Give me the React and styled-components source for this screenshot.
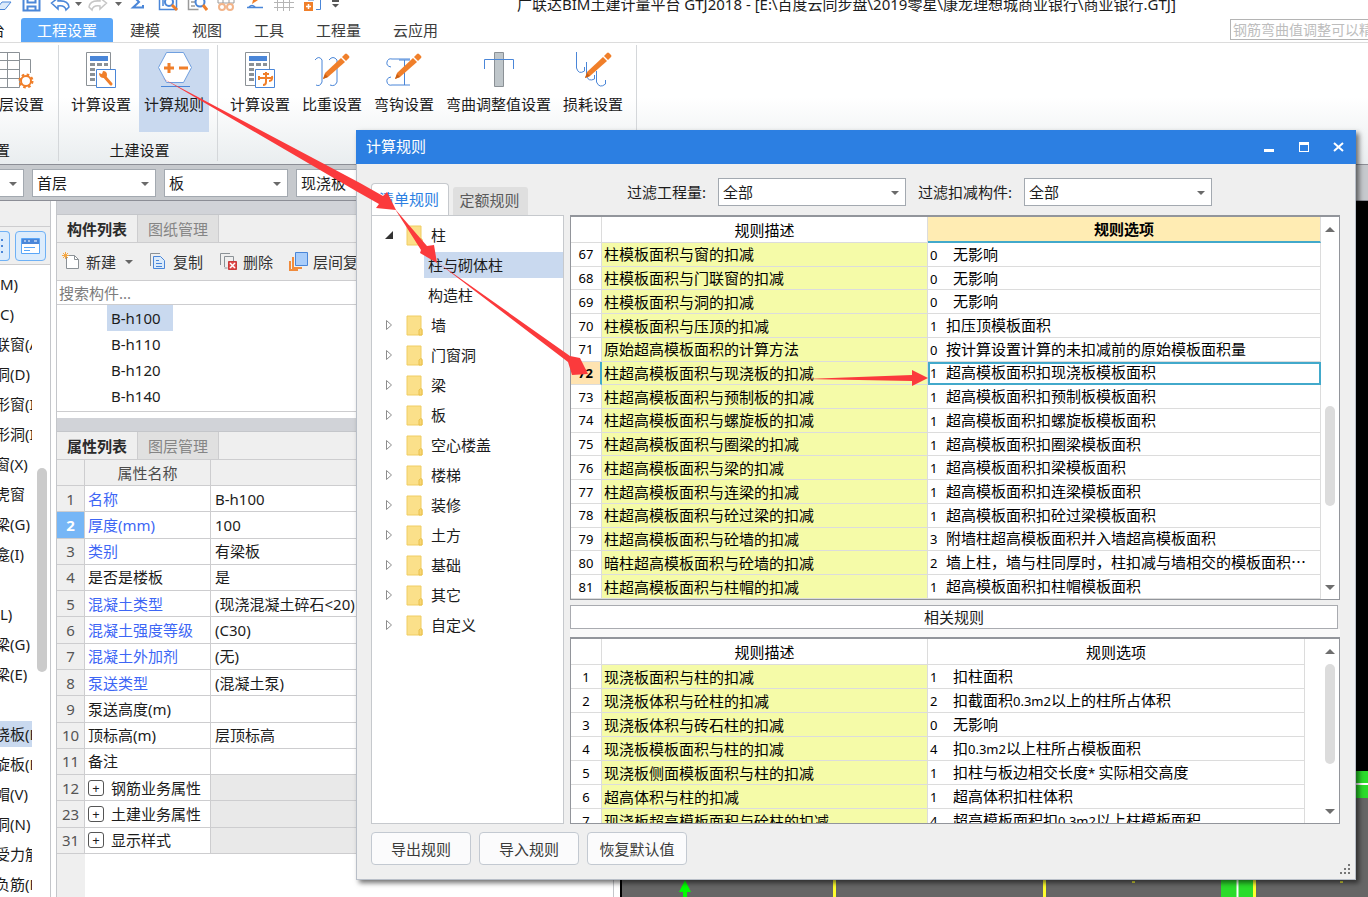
import React from "react";
import styled, { createGlobalStyle, css } from "styled-components";

const UI_FONT = '"Noto Sans", "Noto Sans CJK SC", sans-serif';
const GRID_FONT = '"Noto Sans CJK SC", "Noto Sans", sans-serif';

const color = {
  blue: "#2c7fe2",
  tab: "#59a6f8",
  selected: "#c9d9ef",
  panel: "#efefef",
  line: "#cdcdcf",
  frame: "#8c8e96",
  yellow: "#f5fba8",
  teal: "#42a9cb",
  orange: "#f07f2a",
  iconBlue: "#4a86d8",
};

const GlobalStyle = createGlobalStyle`
  *, *::before, *::after { box-sizing: border-box; }
  body {
    margin: 0;
    background: #fff;
    color: #1c1c1c;
    font: 15px/20px ${UI_FONT};
  }
  button, input, select { font: inherit; color: inherit; margin: 0; }
  ul { list-style: none; margin: 0; padding: 0; }
`;

/* ---------- window frame ---------- */

const Window = styled.div`
  position: relative;
  display: flex;
  flex-direction: column;
  height: 100vh;
  overflow: hidden;
  white-space: nowrap;
`;

const TitleBar = styled.header`
  display: flex;
  flex: none;
  height: 18px;
  overflow: hidden;
`;

const QuickTools = styled.div`
  display: flex;
  width: 517px;
  flex: none;
`;

const QuickButton = styled.button`
  flex: none;
  display: flex;
  justify-content: center;
  width: ${(p) => p.$w}px;
  height: 12px;
  padding: 0;
  border: 0;
  background: none;
  overflow: hidden;
  svg { flex: none; }
`;

const WindowTitle = styled.h1`
  margin: -7px 0 0;
  font-size: 15px;
  line-height: 22px;
  font-weight: 400;
`;

const MenuBar = styled.nav`
  display: flex;
  flex: none;
  justify-content: space-between;
  height: 25px;
  border-bottom: 1px solid #dcdcdc;
`;

const MenuTabs = styled.div`
  display: flex;
`;

const MenuClip = styled.button`
  display: flex;
  justify-content: flex-end;
  width: 5px;
  margin-right: 16px;
  padding: 0;
  border: 0;
  background: none;
  overflow: hidden;
  line-height: 24px;
`;

const MenuTab = styled.button`
  padding: 0 16px;
  border: 0;
  border-radius: 3px 3px 0 0;
  background: none;
  color: #3c3c3c;
  line-height: 24px;
  ${(p) => p.$active && css`
    margin-right: 1px;
    background: ${color.tab};
    color: #fff;
  `}
`;

const HelpSearch = styled.input`
  width: 138px;
  height: 21px;
  margin-top: 1px;
  padding: 0 0 0 2px;
  border: 1px solid #b4b4b4;
  border-right: 0;
  background: #fff;
  font-size: 14px;
  &::placeholder { color: #bdbdbd; opacity: 1; }
`;

/* ---------- ribbon ---------- */

const Ribbon = styled.div`
  display: flex;
  flex: none;
  height: 121px;
  padding-top: 2px;
  background: linear-gradient(#fff 45%, #e9edef);
`;

const RibbonGroup = styled.section`
  display: flex;
  flex-direction: column;
  justify-content: space-between;
  height: 116px;
  padding: 4px 8px 1px 7px;
  border-right: 1px solid #d4d7da;
  ${(p) => p.$cut && css`
    width: 59px;
    padding-left: 0;
    overflow: hidden;
  `}
`;

const RibbonItems = styled.div`
  display: flex;
  gap: ${(p) => (p.$tight ? 2 : 3)}px;
`;

const RibbonButton = styled.button`
  display: flex;
  flex-direction: column;
  align-items: center;
  gap: 3px;
  height: 83px;
  padding: 2px 5px 0;
  border: 0;
  background: ${(p) => (p.$active ? color.selected : "transparent")};
  line-height: 24px;
  ${(p) => p.$cut && css`
    padding: 2px 0 0;
    align-items: flex-start;
    margin-left: -1px;
  `}
`;

const GroupLabel = styled.div`
  text-align: ${(p) => (p.$cut ? "left" : "center")};
  margin-left: ${(p) => (p.$cut ? "-5px" : "4px")};
  line-height: 20px;
`;

const SelectorBar = styled.div`
  display: flex;
  flex: none;
  gap: 8px;
  height: 37px;
  padding-top: 4px;
  border-top: 1px solid ${color.frame};
  border-bottom: 1px solid ${color.frame};
  background: #c6c9cd;
`;

const SelectBox = styled.span`
  position: relative;
  flex: none;
  display: block;
  width: ${(p) => p.$w}px;
  height: 28px;
  border: 1px solid #a3a9b0;
  border-left-width: ${(p) => (p.$cut ? 0 : 1)}px;
  background: #fff;
  &::after {
    content: "";
    position: absolute;
    right: 6px;
    top: 12px;
    border: 4px solid transparent;
    border-top-color: #6a6a6a;
    border-bottom: 0;
    pointer-events: none;
  }
`;

const Select = styled.select`
  display: block;
  width: 100%;
  height: 26px;
  padding: 0 16px 0 4px;
  border: 0;
  background: transparent;
  appearance: none;
`;

/* ---------- left side ---------- */

const Workspace = styled.main`
  display: flex;
  flex: 1;
  min-height: 0;
`;

const NavColumn = styled.aside`
  display: flex;
  flex-direction: column;
  flex: none;
  width: 51px;
  border-right: 1px solid #c4c6ca;
  overflow: hidden;
`;

const NavHead = styled.div`
  flex: none;
  height: 26px;
  background: ${color.panel};
  border-bottom: 1px solid ${color.line};
`;

const NavTools = styled.div`
  display: flex;
  flex: none;
  gap: 5px;
  height: 38px;
  padding-top: 4px;
  background: ${color.panel};
  border-bottom: 1px solid ${color.line};
`;

const NavTool = styled.button`
  display: flex;
  align-items: center;
  justify-content: center;
  width: ${(p) => (p.$cut ? 10 : 31)}px;
  height: 30px;
  padding: 0;
  border: 1px solid #6fb1f5;
  border-left-width: ${(p) => (p.$cut ? 0 : 1)}px;
  border-radius: ${(p) => (p.$cut ? "0 4px 4px 0" : "4px")};
  background: #dcecfc;
`;

const NavBody = styled.div`
  display: flex;
  flex: 1;
  min-height: 0;
  padding-top: 4px;
`;

const NavList = styled.ul`
  width: 32px;
  overflow: hidden;
`;

const NavItem = styled.li`
  display: flex;
  align-items: center;
  height: 30px;
  span {
    flex: 1;
    display: block;
    height: 26px;
    line-height: 26px;
    background: ${(p) => (p.$active ? color.selected : "transparent")};
    text-indent: ${(p) => (p.$whole ? 0 : -5)}px;
  }
`;

const NavThumb = styled.div`
  width: 10px;
  height: 204px;
  margin: 199px 0 0 5px;
  border-radius: 5px;
  background: #cbcbcb;
`;

const PanelColumn = styled.div`
  display: flex;
  flex-direction: column;
  flex: none;
  width: 558px;
  margin-left: 5px;
  border-left: 1px solid #c4c6ca;
  border-right: 1px solid #c4c6ca;
`;

const Panel = styled.section`
  display: flex;
  flex-direction: column;
  flex: ${(p) => (p.$grow ? 1 : "none")};
  margin-bottom: ${(p) => (p.$grow ? 0 : 6)}px;
`;

const PanelBand = styled.div`
  flex: none;
  height: 14px;
  background: #d1d3d8;
  border-bottom: 1px solid #c4c6ca;
`;

const PanelTabs = styled.div`
  display: flex;
  flex: none;
  height: 28px;
  background: ${color.panel};
  border-bottom: 1px solid ${color.line};
`;

const PanelTab = styled.button`
  padding: 0 10px;
  border: 0;
  border-right: 1px solid ${color.line};
  background: ${(p) => (p.$active ? color.panel : "#e0e0e0")};
  color: ${(p) => (p.$active ? "#2b2b2b" : "#858585")};
  font-weight: ${(p) => (p.$active ? 700 : 400)};
`;

const PanelToolbar = styled.div`
  display: flex;
  flex: none;
  align-items: center;
  gap: 16px;
  height: 38px;
  padding-left: 5px;
  background: ${color.panel};
  border-bottom: 1px solid ${color.line};
`;

const ToolButton = styled.button`
  display: flex;
  align-items: center;
  gap: 5px;
  padding: 0;
  border: 0;
  background: none;
  color: #333;
`;

const Caret = styled.i`
  margin-left: ${(p) => (p.$gap ? 4 : 0)}px;
  border: 4px solid transparent;
  border-top-color: #666;
  border-bottom: 0;
`;

const PartSearch = styled.input`
  flex: none;
  height: 24px;
  padding: 0 2px;
  border: 0;
  border-bottom: 1px solid ${color.line};
  outline: 0;
  &::placeholder { color: #7c7c7c; opacity: 1; }
`;

const PartList = styled.ul`
  height: 107px;
  padding-left: 50px;
  border-bottom: 1px solid ${color.line};
`;

const PartItem = styled.li`
  width: 66px;
  padding-left: 4px;
  line-height: 26px;
  background: ${(p) => (p.$active ? color.selected : "transparent")};
`;

const PropTable = styled.table`
  width: 100%;
  height: 394px;
  border-collapse: separate;
  border-spacing: 0;
  table-layout: fixed;
  th, td {
    height: 26px;
    padding: 0 4px;
    border-right: 1px solid ${color.line};
    border-bottom: 1px solid ${color.line};
    font-weight: 400;
    text-align: left;
    overflow: hidden;
  }
  thead th { background: ${color.panel}; color: #4c4c4c; text-align: center; }
`;

const PropNo = styled.th`
  && {
    padding: 0;
    text-align: center;
    color: ${(p) => (p.$active ? "#fff" : "#555")};
    background: ${(p) => (p.$active ? "#76b6f6" : color.panel)};
    font-weight: ${(p) => (p.$active ? 700 : 400)};
  }
`;

const PropName = styled.td`
  && { padding-left: 3px; }
  color: ${(p) => (p.$link ? "#3d66f5" : "#1c1c1c")};
`;

const PropValue = styled.td`
  background: ${(p) => (p.$group ? "#e9e9e9" : "#fff")};
`;

const Expand = styled.button`
  width: 16px;
  height: 16px;
  margin-right: 7px;
  padding: 0;
  border: 1px solid #555;
  border-radius: 3px;
  background: #fff;
  font-size: 13px;
  line-height: 12px;
  vertical-align: 1px;
`;

const GutterTail = styled.div`
  flex: 1;
  width: 28px;
  background: ${color.panel};
`;

const DrawingArea = styled.div`
  flex: 1;
  min-width: 0;
  margin-left: 6px;
  overflow: hidden;
  background: #000;
  svg { display: block; }
`;

/* ---------- dialog ---------- */

const Dialog = styled.section`
  position: absolute;
  left: 356px;
  right: 12px;
  top: 130px;
  bottom: 17px;
  display: flex;
  flex-direction: column;
  background: ${color.panel};
  box-shadow: 3px 3px 5px rgba(0, 0, 0, 0.55);
`;

const DialogHead = styled.header`
  display: flex;
  flex: none;
  justify-content: space-between;
  height: 34px;
  padding-left: 10px;
  background: ${color.blue};
  color: #fff;
  h2 { margin: 0; font-size: 15px; font-weight: 400; line-height: 33px; }
`;

const HeadButtons = styled.div`
  display: flex;
`;

const HeadButton = styled.button`
  width: 35px;
  padding: 0;
  border: 0;
  background: none;
  svg { display: block; margin: 0 auto; }
`;

const DialogBody = styled.div`
  display: flex;
  flex-direction: column;
  flex: 1;
  min-height: 0;
  padding: 0 15px 0 14px;
  border: 1px solid #b9bfc8;
  border-top: 0;
`;

const TopStrip = styled.div`
  display: flex;
  flex: none;
  align-items: flex-end;
  height: 51px;
`;

const RuleTab = styled.button`
  padding: 0 2px 2px 0;
  border: 0;
  ${(p) => p.$active ? css`
    width: 78px;
    height: 33px;
    margin: 0 4px -1px 0;
    border: 1px solid #c6c9cd;
    border-bottom: 0;
    border-radius: 4px 4px 0 0;
    background: #fff;
    color: ${color.blue};
  ` : css`
    width: 75px;
    height: 28px;
    border-radius: 3px 3px 0 0;
    background: #dfdfdf;
    color: #5a5a5a;
  `}
`;

const Filters = styled.div`
  display: flex;
  align-self: flex-start;
  gap: 12px;
  margin: 14px 0 0 99px;
  label { line-height: 28px; }
`;

const Columns = styled.div`
  display: flex;
  flex: 1;
  gap: 6px;
  min-height: 0;
`;

const TreeBox = styled.div`
  flex: none;
  width: 193px;
  padding-top: 4px;
  border: 1px solid #c6c9cd;
  background: #fff;
`;

const TreeItem = styled.li`
  display: flex;
  align-items: center;
  height: 30px;
  padding-left: 12px;
`;

const Folder = styled.svg`
  flex: none;
  margin: 0 8px 0 12px;
`;

const TreeLeaf = styled.li`
  display: flex;
  align-items: center;
  height: 30px;
  padding-left: 52px;
  span {
    flex: 1;
    padding-left: 4px;
    line-height: 26px;
    background: ${(p) => (p.$active ? color.selected : "transparent")};
  }
`;

const RuleColumn = styled.div`
  display: flex;
  flex-direction: column;
  flex: 1;
  min-width: 0;
`;

const GridFrame = styled.div`
  display: flex;
  flex: ${(p) => (p.$grow ? 1 : "none")};
  min-height: 0;
  border: 1px solid #92959b;
  border-top-width: 2px;
  background: #fff;
  overflow: hidden;
`;

const GridArea = styled.div`
  flex: 1;
  min-width: 0;
  margin-right: ${(p) => (p.$inset ? 16 : 0)}px;
`;

const Grid = styled.table`
  width: 100%;
  height: ${(p) => (p.$h ? `${p.$h}px` : "auto")};
  border-collapse: separate;
  border-spacing: 0;
  table-layout: fixed;
  color: #000;
  font-family: ${GRID_FONT};
  th, td {
    height: ${(p) => (p.$h ? 23 : 24)}px;
    padding: 0 2px;
    border-right: 1px solid #dcdcdc;
    border-bottom: 1px solid #dcdcdc;
    font-weight: 400;
    text-align: left;
    overflow: hidden;
  }
  thead th { height: 26px; text-align: center; }
`;

const OptionHead = styled.th`
  ${(p) => p.$active && css`
    &&& {
      background: #ffecb3;
      border-bottom: 2px solid ${color.teal};
      font-weight: 700;
    }
  `}
`;

const RowNo = styled.th`
  && {
    padding: 0;
    text-align: center;
    font-family: ${UI_FONT};
    font-size: 13px;
    ${(p) => p.$active && css`
      background: #ffe3b0;
      border-right: 2px solid ${color.teal};
      font-weight: 700;
    `}
  }
`;

const Desc = styled.td`
  background: ${color.yellow};
`;

const Option = styled.td`
  ${(p) => p.$active && css`
    && {
      outline: 2px solid ${color.teal};
      outline-offset: -2px;
    }
  `}
`;

const Code = styled.span`
  display: inline-block;
  width: ${(p) => (p.$wide ? 23 : 16)}px;
  font-family: ${UI_FONT};
  font-size: 13px;
`;

const Half = styled.span`
  font-family: ${UI_FONT};
  font-size: 13px;
`;

const ScrollTrack = styled.div`
  display: flex;
  flex-direction: column;
  align-items: center;
  flex: none;
  width: 18px;
  padding: 10px 0 9px;
`;

const ScrollArrow = styled.i`
  flex: none;
  border: 5px solid transparent;
  ${(p) => p.$down
    ? css`border-top-color: #6e6e6e; border-bottom: 0; margin-top: auto;`
    : css`border-bottom-color: #6e6e6e; border-top: 0;`}
`;

const ScrollThumb = styled.div`
  flex: none;
  width: 10px;
  height: 100px;
  margin-top: ${(p) => p.$top}px;
  border-radius: 5px;
  background: #dcdcdc;
`;

const RelatedBar = styled.div`
  flex: none;
  height: 24px;
  margin: 5px 2px 0 0;
  border: 1px solid #a9abb0;
  background: #fff;
  line-height: 22px;
  text-align: center;
`;

const Splitter = styled.div`
  flex: none;
  height: 8px;
  background: #f9f9f9;
`;

const DialogFoot = styled.footer`
  position: relative;
  display: flex;
  flex: none;
  gap: 8px;
  height: 55px;
  padding-top: 8px;
`;

const FootButton = styled.button`
  width: 100px;
  height: 33px;
  padding: 0;
  border: 1px solid #c3c9d1;
  border-radius: 4px;
  background: #fbfbfc;
  color: #3a3a3a;
`;

const Grip = styled.svg`
  position: absolute;
  right: -11px;
  bottom: 4px;
`;

const Arrows = styled.svg`
  position: absolute;
  left: 0;
  top: 0;
  pointer-events: none;
`;

/* ---------- icons ---------- */

const Pencil = () => (
  <g>
    <path d="M10 28l2-6L28 7l4 4-17 15z" fill={color.orange} />
    <path d="M29 6l3-3q1-1 2 0l2 2q1 1 0 2l-3 3z" fill={color.orange} />
    <path d="M10 28l2-5 3 3z" fill="#c95f14" />
  </g>
);

const Calculator = () => (
  <g>
    <path d="M4.500 1.500h24v18M4.500 1.500v33h11" fill="#fff" stroke="#8b9196" />
    <path d="M8 5h18v5H8z" fill={color.iconBlue} />
    <path d="M8 12h5v3H8zM15 12h5v3h-5zM22 12h4v3h-4zM8 17h5v3H8zM8 22h5v3H8zM8 27h5v3H8z" fill="#8b9196" />
    <path d="M14.500 18.500h19v18h-19z" fill="#fff" stroke={color.iconBlue} />
  </g>
);

const ribbonArt = {
  floors: (
    <g fill="none">
      <path d="M0 1.500h20.500v35H0M8.500 1v36M0 9.500h20M0 18.500h20M0 27.500h20M21 8.500h10.500V22" stroke="#8b9196" />
      <circle cx="27" cy="30" r="5" stroke={color.orange} strokeWidth="2" />
      <circle cx="27" cy="30" r="6" stroke={color.orange} strokeWidth="3" strokeDasharray="2.4 2.3" />
    </g>
  ),
  wrench: (
    <g>
      <Calculator />
      <path d="M22 25l7 8" stroke={color.orange} strokeWidth="3" strokeLinecap="round" />
      <path d="M17 22l3 1 1-3q4 0 4 4 0 3-3 3-5 0-5-5z" fill={color.orange} />
    </g>
  ),
  rules: (
    <g>
      <path d="M11.500 1.500h17l8 15-8 15h-17l-8-15z" fill="#fff" stroke="#6f9fdf" />
      <path d="M9 17h10M14 12v10M24 17h9" stroke={color.orange} strokeWidth="3" />
      <path d="M6 35.500h29" stroke={color.iconBlue} />
    </g>
  ),
  hooks: (
    <g>
      <Calculator />
      <path d="M25 21v10q0 3-3 3M22 23h6M18 27h13M18 25v4M31 25q1 5-3 5" fill="none" stroke={color.orange} strokeWidth="2" />
    </g>
  ),
  weight: (
    <g>
      <path d="M2 9q4-5 7 0v22q-2 5-6 3M16 9q4-5 8 0v22q-2 5-7 3" fill="none" stroke={color.iconBlue} />
      <Pencil />
    </g>
  ),
  bend: (
    <g>
      <path d="M6 16q-5-1-4-5t5-3h18M6 26q-5 1-4 5t5 3h18M19.500 9v25M14 9h11" fill="none" stroke={color.iconBlue} />
      <Pencil />
    </g>
  ),
  adjust: (
    <g>
      <path d="M14.500 1.500h9v34h-9z" fill="#bfc6ca" stroke="#8b9196" />
      <path d="M4.500 18V8.500h29V18" fill="none" stroke={color.iconBlue} />
    </g>
  ),
  loss: (
    <g>
      <path d="M2.500 1v16q2 7 8 3V16M12.500 11v14q2 6 8 3v-4M22.500 20v11q3 7 9 2v-4" fill="none" stroke={color.iconBlue} />
      <g transform="translate(1 -1)"><Pencil /></g>
    </g>
  ),
};

const RibbonIcon = ({ kind }) => (
  <svg width="38" height="38" viewBox="0 0 38 38" aria-hidden="true">{ribbonArt[kind]}</svg>
);

const gray = "#9a9a9a";
const quickArt = {
  open: <path d="M0 9.500l7 0L13 2H4L0 7" fill="#dceafa" stroke={color.iconBlue} />,
  save: <path d="M2.500 0v10.500h16V0M6.500 0v2.500h8V0M6.500 10V6.500h8V10" fill="none" stroke={color.iconBlue} strokeWidth="2" />,
  undo: <path d="M1.500 3L8 -2v3q10-1 11 6l-3 3q-1-5-8-4v3z" fill="none" stroke={color.iconBlue} strokeWidth="1.500" />,
  redo: <path d="M18.500 3L12 -2v3q-10-1-11 6l3 3q1-5 8-4v3z" fill="none" stroke="#c6c6c6" strokeWidth="1.500" />,
  caret: <path d="M7 2h7L10.500 6z" fill="#666" />,
  sum: <path d="M5 -4l6 6-6 5.500h10V5" fill="none" stroke={color.iconBlue} strokeWidth="2" />,
  zoom: (
    <g fill="none">
      <path d="M1.500 0v9.500h17V0M5 0v6" stroke={color.iconBlue} strokeWidth="1.500" />
      <circle cx="11" cy="2" r="4" stroke={color.iconBlue} strokeWidth="2" fill="#fff" />
      <path d="M14 5l5 5" stroke={color.orange} strokeWidth="3" />
    </g>
  ),
  find: (
    <g fill="none">
      <path d="M1.500 0v9.500h10M4 2h4M4 6h4" stroke={gray} strokeWidth="1.500" />
      <circle cx="13" cy="2" r="4.500" stroke={color.iconBlue} strokeWidth="2" fill="#fff" />
      <path d="M16 5l4 5" stroke={color.orange} strokeWidth="3" />
    </g>
  ),
  links: (
    <g fill="none">
      <path d="M2 0v3h16V0M7 0v3M13 0v3" stroke={gray} />
      <circle cx="6" cy="7" r="3" stroke="#f2b48a" strokeWidth="2" />
      <circle cx="14" cy="7" r="3" stroke="#f2b48a" strokeWidth="2" />
    </g>
  ),
  pen: (
    <g>
      <path d="M7 4l1-4h5z" fill={color.orange} />
      <path d="M2 7.500h16M4 7q3-3 6 0" fill="none" stroke={color.iconBlue} strokeWidth="1.500" />
    </g>
  ),
  grid: <path d="M0 2.500h20M0 7.500h20M3.500 0v11M9.500 0v11M15.500 0v11" fill="none" stroke="#b5b5b5" />,
  add: (
    <g>
      <path d="M1 2h9v9H1z" fill={color.orange} />
      <path d="M3 6.500h5M5.500 4v5" stroke="#fff" strokeWidth="1.500" />
      <path d="M13 9.500h4.500V0M5 0h6" fill="none" stroke={color.iconBlue} />
    </g>
  ),
  more: <path d="M7 0h7v2H7zM7 4h7l-3.500 3.500z" fill="#555" />,
};

const quickTools = [
  ["打开", "open", 16], ["保存", "save", 30], ["撤销", "undo", 28], ["撤销选项", "caret", 8],
  ["恢复", "redo", 32], ["恢复选项", "caret", 8], ["汇总计算", "sum", 32], ["查看", "zoom", 29],
  ["查找", "find", 29], ["关联", "links", 29], ["编辑", "pen", 29], ["表格", "grid", 29],
  ["添加", "add", 29], ["更多", "more", 14],
];

const toolArt = {
  add: (
    <g fill="none">
      <path d="M4.500 3.500h8l4 4v9h-12z" fill="#fff" stroke="#8b9196" />
      <path d="M12.500 3.500v4h4" stroke="#8b9196" />
      <path d="M3.500 0v7M0 3.500h7M1 1l5 5M6 1L1 6" stroke="#f5a742" />
    </g>
  ),
  copy: (
    <g fill="none" stroke={color.iconBlue}>
      <path d="M1.500 14V1.500H11" stroke="#8b9196" />
      <path d="M4.500 4.500h7l4 4v8h-11z" fill="#dcebfb" />
      <path d="M7 8.500h3M7 11.500h6M7 14.500h6" />
    </g>
  ),
  remove: (
    <g fill="none" stroke="#8b9196">
      <path d="M1.500 13V1.500H11M5.500 15V4.500h9V9M5.500 16h3" />
      <path d="M9.500 9.500h8v8h-8z" fill="#e04a4a" stroke="#c93b3b" />
      <path d="M11 11l5 5M16 11l-5 5" stroke="#fff" strokeWidth="1.500" />
    </g>
  ),
  layers: (
    <g fill="none">
      <path d="M6.500 .500h12v13h-12z" fill="#a9cdfa" stroke={color.iconBlue} />
      <path d="M4 5v11h9M1 9v9h8" stroke="#f08b3c" strokeWidth="2" />
    </g>
  ),
};

const ToolIcon = ({ kind }) => (
  <svg width="19" height="19" viewBox="0 0 19 19" aria-hidden="true">{toolArt[kind]}</svg>
);

/* ---------- data ---------- */

const rules = [
  [67, "柱模板面积与窗的扣减", "0", "无影响", true],
  [68, "柱模板面积与门联窗的扣减", "0", "无影响", true],
  [69, "柱模板面积与洞的扣减", "0", "无影响", true],
  [70, "柱模板面积与压顶的扣减", "1", "扣压顶模板面积"],
  [71, "原始超高模板面积的计算方法", "0", "按计算设置计算的未扣减前的原始模板面积量"],
  [72, "柱超高模板面积与现浇板的扣减", "1", "超高模板面积扣现浇板模板面积"],
  [73, "柱超高模板面积与预制板的扣减", "1", "超高模板面积扣预制板模板面积"],
  [74, "柱超高模板面积与螺旋板的扣减", "1", "超高模板面积扣螺旋板模板面积"],
  [75, "柱超高模板面积与圈梁的扣减", "1", "超高模板面积扣圈梁模板面积"],
  [76, "柱超高模板面积与梁的扣减", "1", "超高模板面积扣梁模板面积"],
  [77, "柱超高模板面积与连梁的扣减", "1", "超高模板面积扣连梁模板面积"],
  [78, "柱超高模板面积与砼过梁的扣减", "1", "超高模板面积扣砼过梁模板面积"],
  [79, "柱超高模板面积与砼墙的扣减", "3", "附墙柱超高模板面积并入墙超高模板面积"],
  [80, "暗柱超高模板面积与砼墙的扣减", "2", "墙上柱，墙与柱同厚时，柱扣减与墙相交的模板面积…"],
  [81, "柱超高模板面积与柱帽的扣减", "1", "超高模板面积扣柱帽模板面积"],
];

const relatedRules = [
  [1, "现浇板面积与柱的扣减", "1", "扣柱面积", true],
  [2, "现浇板体积与砼柱的扣减", "2", "扣截面积0.3m2以上的柱所占体积", true],
  [3, "现浇板体积与砖石柱的扣减", "0", "无影响", true],
  [4, "现浇板模板面积与柱的扣减", "4", "扣0.3m2以上柱所占模板面积", true],
  [5, "现浇板侧面模板面积与柱的扣减", "1", "扣柱与板边相交长度* 实际相交高度", true],
  [6, "超高体积与柱的扣减", "1", "超高体积扣柱体积", true],
  [7, "现浇板超高模板面积与砼柱的扣减", "4", "超高模板面积扣0.3m2以上柱模板面积", true],
];

const props = [
  [1, "名称", "B-h100", "link"],
  [2, "厚度(mm)", "100", "link"],
  [3, "类别", "有梁板", "link"],
  [4, "是否是楼板", "是"],
  [5, "混凝土类型", "(现浇混凝土碎石<20)", "link"],
  [6, "混凝土强度等级", "(C30)", "link"],
  [7, "混凝土外加剂", "(无)", "link"],
  [8, "泵送类型", "(混凝土泵)", "link"],
  [9, "泵送高度(m)", ""],
  [10, "顶标高(m)", "层顶标高"],
  [11, "备注", ""],
  [12, "钢筋业务属性", "", "group"],
  [23, "土建业务属性", "", "group"],
  [31, "显示样式", "", "group"],
];

const navItems = [
  ["M)", true], ["C)", true], ["联窗(A"], ["洞(D)"], ["形窗(I"], ["形洞(I"], ["窗(X)"], ["虎窗"],
  ["梁(G)"], ["龛(I)"], [""], ["L)", true], ["梁(G)"], ["梁(E)"], [""], ["浇板(B"], ["旋板(B"],
  ["帽(V)"], ["洞(N)"], ["受力筋"], ["负筋(F"],
];

const folders = ["墙", "门窗洞", "梁", "板", "空心楼盖", "楼梯", "装修", "土方", "基础", "其它", "自定义"];

/* ---------- composed parts ---------- */

const Combo = ({ id, label, width, value, cut }) => (
  <SelectBox $w={width} $cut={cut}>
    <Select id={id} aria-label={label} defaultValue={value}>
      <option>{value}</option>
    </Select>
  </SelectBox>
);

const mixedText = (text) =>
  text.split(/([!-~]+)/).map((part, i) => (i % 2 ? <Half key={i}>{part}</Half> : part));

const RuleGrid = ({ rows, height, activeRow, label }) => (
  <Grid $h={height} aria-label={label}>
    <colgroup>
      <col style={{ width: 31 }} />
      <col style={{ width: 326 }} />
      <col />
    </colgroup>
    <thead>
      <tr>
        <th />
        <th>规则描述</th>
        <OptionHead $active={Boolean(activeRow)}>规则选项</OptionHead>
      </tr>
    </thead>
    <tbody>
      {rows.map(([no, desc, code, option, wide]) => (
        <tr key={no}>
          <RowNo $active={no === activeRow}>{no}</RowNo>
          <Desc>{desc}</Desc>
          <Option $active={no === activeRow}>
            <Code $wide={wide}>{code}</Code>
            {mixedText(option)}
          </Option>
        </tr>
      ))}
    </tbody>
  </Grid>
);

const Scroll = ({ top }) => (
  <ScrollTrack aria-hidden="true">
    <ScrollArrow />
    <ScrollThumb $top={top} />
    <ScrollArrow $down />
  </ScrollTrack>
);

const FolderIcon = () => (
  <Folder width="17" height="21" viewBox="0 0 17 21" aria-hidden="true">
    <path d="M1 1h14v13l1 1v5H1z" fill="#fbe08a" stroke="#f0cd62" />
    <path d="M13 19v-4q1-2 3-1v6h-3z" fill="#f7d673" stroke="#e9c04d" />
  </Folder>
);

const RibbonCommand = ({ icon, label, active, cut }) => (
  <RibbonButton $active={active} $cut={cut}>
    <RibbonIcon kind={icon} />
    <span>{label}</span>
  </RibbonButton>
);

const RuleDialog = () => (
  <Dialog role="dialog" aria-label="计算规则">
    <DialogHead>
      <h2>计算规则</h2>
      <HeadButtons>
        <HeadButton aria-label="最小化">
          <svg width="12" height="12"><path d="M1 8h10v3H1z" fill="#fff" /></svg>
        </HeadButton>
        <HeadButton aria-label="最大化">
          <svg width="12" height="12"><path d="M1 1h10v10H1zM2 4v6h8V4z" fill="#fff" fillRule="evenodd" /></svg>
        </HeadButton>
        <HeadButton aria-label="关闭">
          <svg width="12" height="12"><path d="M1 2l9 8M10 2l-9 8" stroke="#fff" strokeWidth="2" /></svg>
        </HeadButton>
      </HeadButtons>
    </DialogHead>
    <DialogBody>
      <TopStrip>
        <RuleTab $active>清单规则</RuleTab>
        <RuleTab>定额规则</RuleTab>
        <Filters>
          <label htmlFor="filter-quantity">过滤工程量:</label>
          <Combo id="filter-quantity" width={188} value="全部" />
          <label htmlFor="filter-part">过滤扣减构件:</label>
          <Combo id="filter-part" width={188} value="全部" />
        </Filters>
      </TopStrip>
      <Columns>
        <TreeBox>
          <ul>
            <TreeItem>
              <svg width="10" height="10" aria-hidden="true"><path d="M1 9l8-8v8z" fill="#333" /></svg>
              <FolderIcon />
              柱
            </TreeItem>
            <TreeLeaf $active><span>柱与砌体柱</span></TreeLeaf>
            <TreeLeaf><span>构造柱</span></TreeLeaf>
            {folders.map((name) => (
              <TreeItem key={name}>
                <svg width="10" height="10" aria-hidden="true">
                  <path d="M2.500 .500v9L7.500 5z" fill="#fff" stroke="#8c8c8c" />
                </svg>
                <FolderIcon />
                {name}
              </TreeItem>
            ))}
          </ul>
        </TreeBox>
        <RuleColumn>
          <GridFrame>
            <GridArea>
              <RuleGrid rows={rules} height={382} activeRow={72} label="清单规则" />
            </GridArea>
            <Scroll top={174} />
          </GridFrame>
          <RelatedBar>相关规则</RelatedBar>
          <Splitter />
          <GridFrame $grow>
            <GridArea $inset>
              <RuleGrid rows={relatedRules} label="相关规则" />
            </GridArea>
            <Scroll top={10} />
          </GridFrame>
        </RuleColumn>
      </Columns>
      <DialogFoot>
        <FootButton>导出规则</FootButton>
        <FootButton>导入规则</FootButton>
        <FootButton>恢复默认值</FootButton>
        <Grip width="11" height="11" aria-hidden="true">
          <path d="M8 0h2v2H8zM4 4h2v2H4zM8 4h2v2H8zM0 8h2v2H0zM4 8h2v2H4zM8 8h2v2H8z" fill="#777" />
        </Grip>
      </DialogFoot>
    </DialogBody>
  </Dialog>
);

export default function App() {
  return (
    <Window>
      <GlobalStyle />
      <TitleBar>
        <QuickTools>
          {quickTools.map(([label, kind, width]) => (
            <QuickButton key={label} $w={width} aria-label={label}>
              <svg width="21" height="12" viewBox="0 0 21 12">{quickArt[kind]}</svg>
            </QuickButton>
          ))}
        </QuickTools>
        <WindowTitle>
          {"广联达BIM土建计量平台 GTJ2018 - [E:\\百度云同步盘\\2019零星\\康龙理想城商业银行\\商业银行.GTJ]"}
        </WindowTitle>
      </TitleBar>
      <MenuBar>
        <MenuTabs>
          <MenuClip>台</MenuClip>
          <MenuTab $active>工程设置</MenuTab>
          <MenuTab>建模</MenuTab>
          <MenuTab>视图</MenuTab>
          <MenuTab>工具</MenuTab>
          <MenuTab>工程量</MenuTab>
          <MenuTab>云应用</MenuTab>
        </MenuTabs>
        <HelpSearch aria-label="搜索" placeholder="钢筋弯曲值调整可以精" />
      </MenuBar>
      <Ribbon>
        <RibbonGroup $cut>
          <RibbonItems>
            <RibbonCommand icon="floors" label="层设置" cut />
          </RibbonItems>
          <GroupLabel $cut>置</GroupLabel>
        </RibbonGroup>
        <RibbonGroup>
          <RibbonItems>
            <RibbonCommand icon="wrench" label="计算设置" />
            <RibbonCommand icon="rules" label="计算规则" active />
          </RibbonItems>
          <GroupLabel>土建设置</GroupLabel>
        </RibbonGroup>
        <RibbonGroup>
          <RibbonItems $tight>
            <RibbonCommand icon="hooks" label="计算设置" />
            <RibbonCommand icon="weight" label="比重设置" />
            <RibbonCommand icon="bend" label="弯钩设置" />
            <RibbonCommand icon="adjust" label="弯曲调整值设置" />
            <RibbonCommand icon="loss" label="损耗设置" />
          </RibbonItems>
        </RibbonGroup>
      </Ribbon>
      <SelectorBar>
        <Combo label="工程" width={24} value="" cut />
        <Combo label="楼层" width={124} value="首层" />
        <Combo label="构件类型" width={124} value="板" />
        <Combo label="构件" width={124} value="现浇板" />
      </SelectorBar>
      <Workspace>
        <NavColumn>
          <NavHead />
          <NavTools>
            <NavTool $cut aria-label="列表">
              <svg width="8" height="18"><path d="M0 3h2M0 9h2M0 15h2" stroke={color.iconBlue} strokeWidth="2" /></svg>
            </NavTool>
            <NavTool aria-label="面板">
              <svg width="20" height="18">
                <path d="M.500 1.500h18v15H.500z" fill="#fff" stroke={color.tab} />
                <path d="M1 2h17v5H1z" fill={color.iconBlue} />
                <path d="M3 4h2M7 4h2M13 4h3" stroke="#fff" />
                <path d="M3 10.500h11M3 13.500h6" stroke={color.tab} />
              </svg>
            </NavTool>
          </NavTools>
          <NavBody>
            <NavList>
              {navItems.map(([text, whole], i) => (
                <NavItem key={i} $whole={whole} $active={i === 15}><span>{text}</span></NavItem>
              ))}
            </NavList>
            <NavThumb />
          </NavBody>
        </NavColumn>
        <PanelColumn>
          <Panel>
            <PanelBand />
            <PanelTabs>
              <PanelTab $active>构件列表</PanelTab>
              <PanelTab>图纸管理</PanelTab>
            </PanelTabs>
            <PanelToolbar>
              <ToolButton><ToolIcon kind="add" />新建<Caret $gap /></ToolButton>
              <ToolButton><ToolIcon kind="copy" />复制</ToolButton>
              <ToolButton><ToolIcon kind="remove" />删除</ToolButton>
              <ToolButton><ToolIcon kind="layers" />层间复</ToolButton>
            </PanelToolbar>
            <PartSearch aria-label="搜索构件" placeholder="搜索构件..." />
            <PartList>
              <PartItem $active>B-h100</PartItem>
              <PartItem>B-h110</PartItem>
              <PartItem>B-h120</PartItem>
              <PartItem>B-h140</PartItem>
            </PartList>
          </Panel>
          <Panel $grow>
            <PanelBand />
            <PanelTabs>
              <PanelTab $active>属性列表</PanelTab>
              <PanelTab>图层管理</PanelTab>
            </PanelTabs>
            <PropTable>
              <colgroup>
                <col style={{ width: 28 }} />
                <col style={{ width: 126 }} />
                <col />
              </colgroup>
              <thead>
                <tr><th /><th>属性名称</th><th /></tr>
              </thead>
              <tbody>
                {props.map(([no, name, value, kind]) => (
                  <tr key={no}>
                    <PropNo $active={no === 2}>{no}</PropNo>
                    <PropName $link={kind === "link"}>
                      {kind === "group" && <Expand aria-label={`展开${name}`}>+</Expand>}
                      {name}
                    </PropName>
                    <PropValue $group={kind === "group"}>{value}</PropValue>
                  </tr>
                ))}
              </tbody>
            </PropTable>
            <GutterTail />
          </Panel>
        </PanelColumn>
        <DrawingArea>
          <svg width="748" height="697" viewBox="0 0 748 697" aria-hidden="true">
            <path d="M2 597h746v100H2z" fill="#666" />
            <path d="M700 570h48v27h-48z" fill="#2bdc2b" />
            <path d="M700 583h48" stroke="#fff" strokeWidth="2" />
            <path d="M601 670h32v27h-32z" fill="#2bdc2b" />
            <path d="M617.500 670v27" stroke="#fff" strokeWidth="2" />
            <path d="M214.500 670v27M424.500 670v27M634.500 670v27" stroke="#ffff2e" strokeWidth="3" />
            <path d="M512 680h3v2h-3zM720 680h3v2h-3z" fill="#d8d83a" />
            <path d="M65 679l6 12h-4v6h-4v-6h-4z" fill="#00ff00" />
          </svg>
        </DrawingArea>
      </Workspace>
      <RuleDialog />
      <Arrows width="940" height="400" viewBox="0 0 940 400" aria-hidden="true">
        <g fill="#fb3a3c">
          <path d="M162 78L360 183L383 196L387 192L396 210L376 208L379 204L356 191Z" />
          <path d="M395 209L427 246L434 245L437 263L420 253L421 250Z" />
          <path d="M437 262L570 356L580 358L588 374L572 375L568 362Z" />
          <path d="M805 379L912 375V370L928 378L912 386V381Z" />
        </g>
      </Arrows>
    </Window>
  );
}
